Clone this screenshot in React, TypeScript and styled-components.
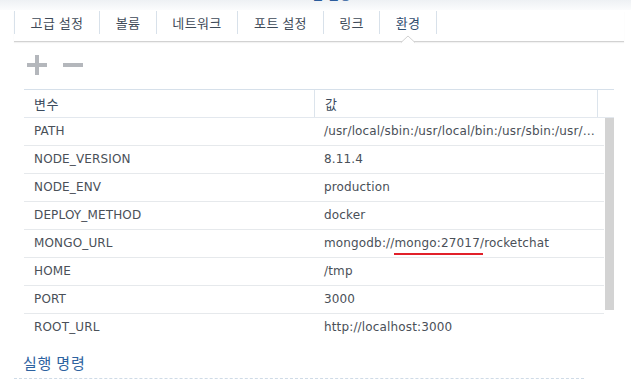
import React from "react";
import styled, { createGlobalStyle } from "styled-components";

const Global = createGlobalStyle`
  html, body { margin: 0; padding: 0; background: #fff; }
  body { font-family: "DejaVu Sans", "Noto Sans CJK KR", sans-serif; }
  * { box-sizing: border-box; }
`;

const Page = styled.div`
  width: 631px;
  height: 391px;
  overflow: hidden;
  background: #fff;
  display: flex;
  flex-direction: column;
`;

const TitleStrip = styled.div`
  height: 10px;
  overflow: hidden;
  background: linear-gradient(#eef1f4, #fbfcfd);
  display: flex;
  justify-content: center;
`;

const TitleText = styled.span`
  margin-top: -15px;
  margin-left: 20px;
  font-family: "Noto Sans CJK KR", sans-serif;
  font-size: 13px;
  line-height: 17px;
  color: #2b5c9c;
`;

const TabBar = styled.div`
  position: relative;
  display: flex;
  margin: 1px 7px 0 14px;
  padding-bottom: 7px;
  border-bottom: 1px solid #d2d2d2;
  box-shadow: 0 1px 1px rgba(0, 0, 0, 0.05);
`;

const Tab = styled.div<{ $active?: boolean; $last?: boolean; $w: number }>`
  position: relative;
  flex: none;
  width: ${(p) => p.$w + (p.$last ? 1 : 0)}px;
  height: 23px;
  text-align: center;
  border-left: 1px solid #d8e1ea;
  border-right: ${(p) => (p.$last ? "1px solid #d8e1ea" : "none")};
  font-family: "Noto Sans CJK KR", sans-serif;
  font-size: 13px;
  letter-spacing: 0.4px;
  line-height: 23px;
  color: ${(p) => (p.$active ? "#2f4c6e" : "#3e4a58")};
  white-space: nowrap;
`;

const Notch = styled.svg`
  position: absolute;
  left: 50%;
  bottom: -9px;
  margin-left: -7px;
  width: 14px;
  height: 8px;
  overflow: visible;
`;

const Toolbar = styled.div`
  display: flex;
  align-items: center;
  gap: 16px;
  height: 47px;
  padding: 0 0 2px 27px;
`;

const IconBtn = styled.svg`
  width: 20px;
  height: 20px;
  display: block;
`;

const Table = styled.div`
  margin-left: 24px;
  width: 590px;
  display: flex;
  flex-direction: column;
`;

const HeaderRow = styled.div`
  display: grid;
  grid-template-columns: 290px 283px 17px;
  height: 29px;
  border-top: 1px solid #d6e0ea;
  border-bottom: 1px solid #e3e8ee;
`;

const HeaderCell = styled.div<{ $sep?: boolean }>`
  padding-left: 10px;
  border-left: ${(p) => (p.$sep ? "1px solid #dce4ec" : "none")};
  font-family: "Noto Sans CJK KR", sans-serif;
  font-size: 13px;
  letter-spacing: 0.5px;
  line-height: 27px;
  color: #3b4b5d;
`;

const BodyWrap = styled.div`
  display: flex;
  height: 223px;
  overflow: hidden;
`;

const Rows = styled.div`
  width: 580px;
  display: flex;
  flex-direction: column;
`;

const Row = styled.div`
  display: grid;
  grid-template-columns: 290px 290px;
  height: 28px;
  flex: none;
  border-bottom: 1px solid #e6e9ec;
`;

const Cell = styled.div`
  padding-left: 10px;
  font-size: 12px;
  letter-spacing: 0.15px;
  line-height: 27px;
  color: #4a5058;
  white-space: nowrap;
  overflow: hidden;
  text-overflow: ellipsis;
  padding-right: 6px;
`;

const Mark = styled.span`
  position: relative;
  &::after {
    content: "";
    position: absolute;
    left: 0;
    right: -3px;
    bottom: -5px;
    height: 2px;
    background: #e1202a;
  }
`;

const ScrollTrack = styled.div`
  width: 10px;
  padding-left: 1px;
`;

const Thumb = styled.div`
  width: 9px;
  height: 192px;
  background: #d3d3d3;
`;

const Section = styled.div`
  margin: 12px 47px 0 14px;
  padding: 0 0 5px 9px;
  border-bottom: 1px dashed #cfdbe7;
`;

const SectionTitle = styled.div`
  font-family: "Noto Sans CJK KR", sans-serif;
  font-size: 15px;
  line-height: 20px;
  letter-spacing: 0.8px;
  color: #2d62a0;
`;

const tabs: [string, number][] = [
  ["고급 설정", 85],
  ["볼륨", 57],
  ["네트워크", 81],
  ["포트 설정", 86],
  ["링크", 56],
  ["환경", 57],
];

const rows: [string, React.ReactNode][] = [
  ["PATH", "/usr/local/sbin:/usr/local/bin:/usr/sbin:/usr/bin:/sbin:/bin"],
  ["NODE_VERSION", "8.11.4"],
  ["NODE_ENV", "production"],
  ["DEPLOY_METHOD", "docker"],
  [
    "MONGO_URL",
    <>
      mongodb://<Mark>mongo:27017</Mark>/rocketchat
    </>,
  ],
  ["HOME", "/tmp"],
  ["PORT", "3000"],
  ["ROOT_URL", "http://localhost:3000"],
];

export default function App() {
  return (
    <Page>
      <Global />
      <TitleStrip>
        <TitleText>고급 설정</TitleText>
      </TitleStrip>
      <TabBar>
        {tabs.map(([t, w], i) => (
          <Tab key={t} $w={w} $active={i === 5} $last={i === 5}>
            {t}
            {i === 5 && (
              <Notch viewBox="0 0 14 8">
                <path d="M0 7.5 L7 1 L14 7.5" fill="#fff" stroke="#d2d2d2" strokeWidth="1" />
                <rect x="1" y="7" width="12" height="2" fill="#fff" />
              </Notch>
            )}
          </Tab>
        ))}
      </TabBar>
      <Toolbar>
        <IconBtn viewBox="0 0 20 20">
          <path d="M0 10 H20 M10 0 V20" stroke="#b4b7bc" strokeWidth="4" />
        </IconBtn>
        <IconBtn viewBox="0 0 20 20">
          <path d="M0 10 H20" stroke="#b4b7bc" strokeWidth="4" />
        </IconBtn>
      </Toolbar>
      <Table>
        <HeaderRow>
          <HeaderCell>변수</HeaderCell>
          <HeaderCell $sep>값</HeaderCell>
          <HeaderCell $sep />
        </HeaderRow>
        <BodyWrap>
          <Rows>
            {rows.map(([k, v]) => (
              <Row key={k}>
                <Cell>{k}</Cell>
                <Cell>{v}</Cell>
              </Row>
            ))}
          </Rows>
          <ScrollTrack>
            <Thumb />
          </ScrollTrack>
        </BodyWrap>
      </Table>
      <Section>
        <SectionTitle>실행 명령</SectionTitle>
      </Section>
    </Page>
  );
}
